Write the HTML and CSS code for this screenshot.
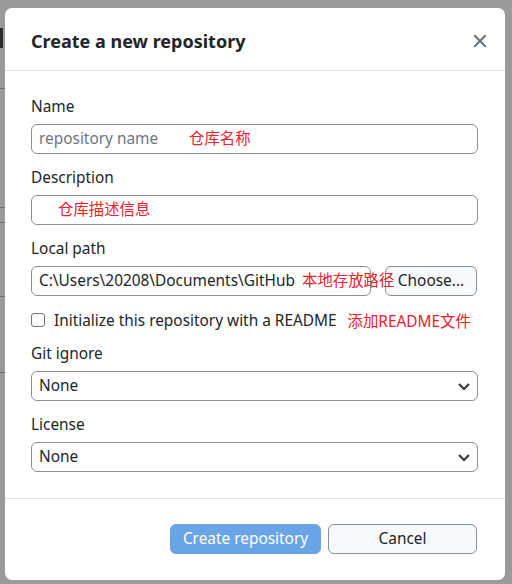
FILE: index.html
```html
<!DOCTYPE html>
<html>
<head>
<meta charset="utf-8">
<link rel="stylesheet" href="styles.css">
</head>
<body>
<div class="backdrop">
  <div class="bg-frag bg-frag-a"></div>
  <div class="bg-line" style="top:88px"></div>
  <div class="bg-line" style="top:207px"></div>
  <div class="bg-line" style="top:222px"></div>
  <div class="bg-line" style="top:296px"></div>
  <div class="bg-line" style="top:372px"></div>
  <div class="modal">
    <div class="modal-header">
      <h2 class="modal-title">Create a new repository</h2>
      <svg class="close" width="14" height="14" viewBox="0 0 14 14"><path d="M2 2 L12 12 M12 2 L2 12" stroke="#6b717a" stroke-width="2" stroke-linecap="square" fill="none"/></svg>
    </div>
    <div class="modal-body">
      <div class="field">
        <label class="label">Name</label>
        <div class="input-wrap">
          <div class="input placeholder">repository name</div>
          <span class="note note-name">仓库名称</span>
        </div>
      </div>
      <div class="field">
        <label class="label">Description</label>
        <div class="input-wrap">
          <div class="input"></div>
          <span class="note note-desc">仓库描述信息</span>
        </div>
      </div>
      <div class="field">
        <label class="label">Local path</label>
        <div class="path-row">
          <div class="input-wrap path-input">
            <div class="input">C:\Users\20208\Documents\GitHub</div>
            <span class="note note-path">本地存放路径</span>
          </div>
          <div class="btn btn-light choose">Choose...</div>
        </div>
      </div>
      <div class="check-row">
        <span class="checkbox"></span>
        <span class="check-text">Initialize this repository with a README</span>
        <span class="note-inline">添加README文件</span>
      </div>
      <div class="field">
        <label class="label">Git ignore</label>
        <div class="input select">None<svg class="chev" width="14" height="10" viewBox="0 0 14 10"><path d="M2 3 L7 8 L12 3" stroke="#343a40" stroke-width="2.2" fill="none"/></svg></div>
      </div>
      <div class="field">
        <label class="label">License</label>
        <div class="input select">None<svg class="chev" width="14" height="10" viewBox="0 0 14 10"><path d="M2 3 L7 8 L12 3" stroke="#343a40" stroke-width="2.2" fill="none"/></svg></div>
      </div>
    </div>
    <div class="modal-footer">
      <div class="btn btn-primary">Create repository</div>
      <div class="btn btn-light cancel">Cancel</div>
    </div>
  </div>
</div>
</body>
</html>
```
FILE: styles.css
```css
html, body {
  margin: 0;
  padding: 0;
}
body {
  width: 512px;
  height: 584px;
  overflow: hidden;
  font-family: "Noto Sans", "Noto Sans CJK SC", sans-serif;
  color: #212529;
}
.backdrop {
  position: relative;
  width: 512px;
  height: 584px;
  background: #9a9a9a;
  padding-top: 8px;
  box-sizing: border-box;
}
.bg-line {
  position: absolute;
  left: 0;
  width: 5px;
  height: 1px;
  background: #6e6e6e;
}
.bg-frag-a {
  position: absolute;
  left: 0;
  top: 28px;
  width: 3px;
  height: 20px;
  background: #2a2a2a;
}
.modal {
  position: relative;
  margin-left: 5px;
  width: 500px;
  height: 572px;
  background: #fff;
  border-radius: 7px;
  display: flex;
  flex-direction: column;
}
.modal-header {
  box-sizing: border-box;
  border-bottom: 1px solid #dee2e6;
  display: flex;
  align-items: center;
  justify-content: space-between;
  padding: 3px 18px 0 26px;
  height: 63px;
}
.modal-title {
  margin: 0;
  font-size: 18px;
  font-weight: 700;
  color: #212529;
}
.close {
  display: block;
}
.modal-body {
  padding: 25px 27px 26px 26px;
  display: flex;
  flex-direction: column;
  gap: 13px;
  border-bottom: 1px solid #dee2e6;
}
.field {
  display: flex;
  flex-direction: column;
  gap: 6px;
}
.label {
  font-size: 15.4px;
  line-height: 22px;
  color: #212529;
}
.input-wrap {
  position: relative;
}
.input {
  height: 30px;
  box-sizing: border-box;
  border: 1px solid #868e96;
  border-radius: 6px;
  padding: 0 7px;
  font-size: 15.4px;
  line-height: 28px;
  color: #212529;
  background: #fff;
  white-space: nowrap;
}
.placeholder {
  color: #6c757d;
}
.note {
  position: absolute;
  top: 0;
  line-height: 30px;
  font-size: 15.4px;
  color: #f0202a;
  white-space: nowrap;
}
.note-name { left: 158px; }
.note-desc { left: 27px; }
.note-path { left: 271px; }
.path-row {
  display: flex;
  gap: 14px;
}
.path-input {
  width: 340px;
}
.btn {
  height: 30px;
  box-sizing: border-box;
  border-radius: 6px;
  font-size: 15.4px;
  line-height: 28px;
  text-align: center;
  white-space: nowrap;
}
.btn-light {
  background: #f8f9fa;
  border: 1px solid #868e96;
  color: #212529;
}
.choose {
  width: 92px;
}
.check-row {
  display: flex;
  align-items: center;
  height: 24px;
  margin-top: -1px;
  margin-bottom: -2px;
}
.checkbox {
  width: 14px;
  height: 14px;
  box-sizing: border-box;
  border: 1px solid #6c757d;
  border-radius: 3px;
  margin-right: 9px;
}
.check-text {
  font-size: 15.4px;
  color: #212529;
}
.note-inline {
  font-size: 15.4px;
  color: #f0202a;
  margin-left: 11px;
}
.select {
  display: flex;
  align-items: center;
  justify-content: space-between;
  padding-right: 6px;
}
.chev {
  display: block;
}
.modal-footer {
  flex: 1;
  display: flex;
  justify-content: flex-end;
  align-items: flex-start;
  padding: 25px 28px 0 0;
  gap: 7px;
}
.btn-primary {
  width: 151px;
  background: #69a5e6;
  border: 1px solid #69a5e6;
  color: #fff;
}
.cancel {
  width: 149px;
}
```
